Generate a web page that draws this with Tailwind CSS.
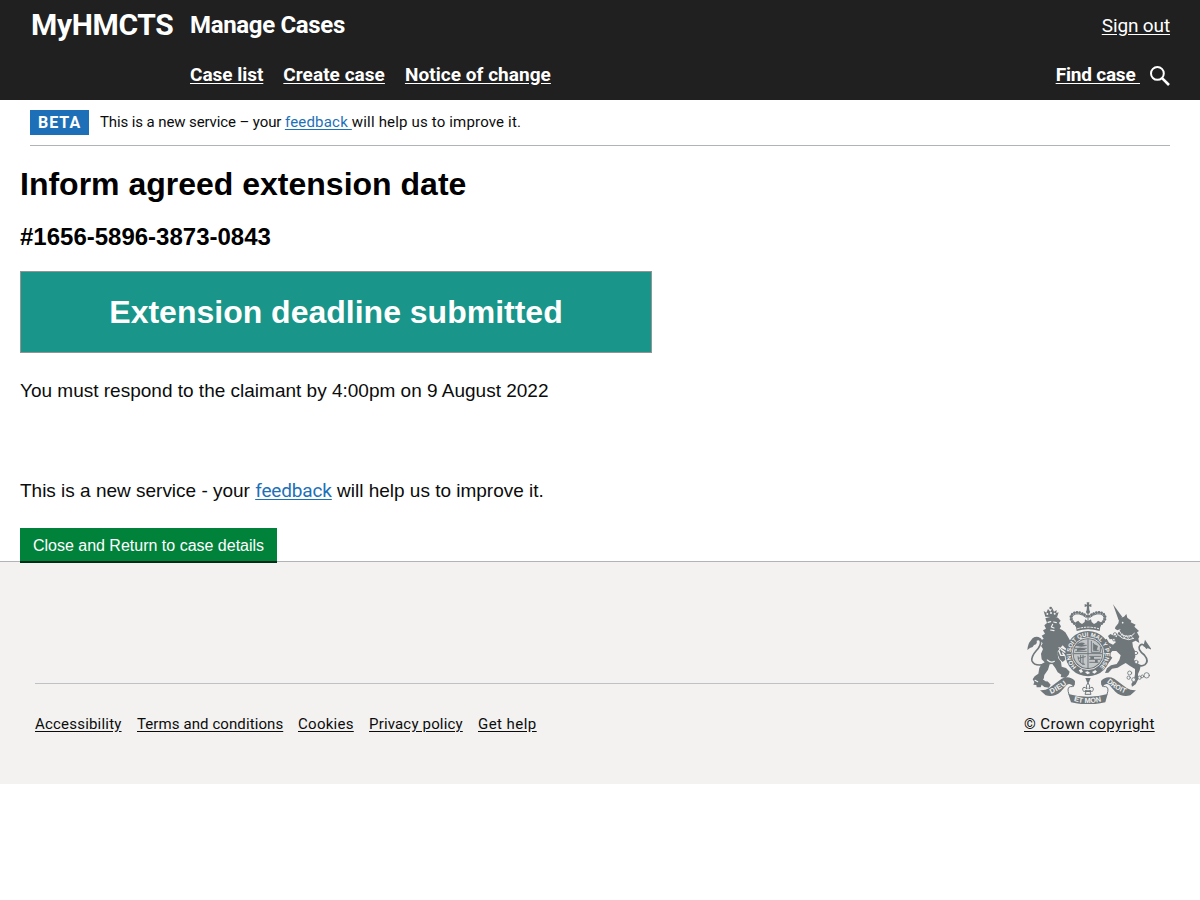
<!DOCTYPE html>
<html lang="en">
<head>
<meta charset="utf-8">
<title>Manage Cases</title>
<script src="https://cdn.jsdelivr.net/npm/@tailwindcss/browser@4"></script>
</head>
<body class="bg-white font-['Roboto',sans-serif] text-[#0b0c0c]">
<header class="flex h-[100px] flex-col bg-[#202020] px-[30px] text-white">
  <div class="flex h-[50px] items-center">
    <div class="w-40 pl-px text-[30px] leading-[50px] font-bold tracking-[-0.35px]">MyHMCTS</div>
    <div class="flex-1 text-2xl leading-[50px] font-bold tracking-[-0.33px]">Manage Cases</div>
    <a class="pt-0.5 text-[19px] leading-6 tracking-[-0.13px] underline underline-offset-2">Sign out</a>
  </div>
  <nav class="flex h-[50px] items-center gap-5 pl-40 text-[19px] font-bold">
    <a class="tracking-[-0.03px] underline underline-offset-2">Case list</a>
    <a class="tracking-[0.04px] underline underline-offset-2">Create case</a>
    <a class="tracking-[0.05px] underline underline-offset-2">Notice of change</a>
    <div class="ml-auto flex items-center gap-2.5">
      <a class="tracking-[-0.2px] whitespace-pre underline underline-offset-2">Find case </a>
      <svg class="mt-0.5 size-5" viewBox="0 0 20 20" fill="none" stroke="white"><circle cx="7.4" cy="7.4" r="6.4" stroke-width="2"/><path d="M11.8 11.8 19 19" stroke-width="2.6"/></svg>
    </div>
  </nav>
</header>
<div class="mx-[30px] flex h-[46px] items-center border-b border-[#b1b4b6]">
  <strong class="h-[25px] w-[59px] bg-[#1d70b8] pl-2 text-base leading-[25px] tracking-[1px] text-white">BETA</strong>
  <span class="ml-[11px] pb-0.5 text-[15px] leading-5 tracking-[-0.11px] whitespace-pre">This is a new service – your <a class="tracking-[0.2px] text-[#1d70b8] underline underline-offset-2">feedback </a><span class="tracking-[0.17px]">will help us to improve it.</span></span>
</div>
<main class="flex h-[415px] flex-col items-start px-5 font-['Liberation_Sans',sans-serif]">
  <h1 class="mt-5 text-[32px] leading-9 font-bold text-black">Inform agreed extension date</h1>
  <h2 class="mt-5 text-2xl leading-[30px] font-bold text-black">#1656-5896-3873-0843</h2>
  <div class="mt-[19px] flex h-[82px] w-[632px] shrink-0 items-center justify-center border border-[#949494] bg-[#19958a] text-[32px] font-bold text-white">Extension deadline submitted</div>
  <p class="mt-[25px] text-[19px] leading-[25px]">You must respond to the claimant by 4:00pm on 9 August 2022</p>
  <p class="mt-[75px] text-[19px] leading-[25px] tracking-[-0.01px]">This is a new service - your <a class="font-['Roboto',sans-serif] tracking-[-0.15px] text-[#1d70b8] underline underline-offset-2">feedback</a> will help us to improve it.</p>
  <button class="relative mt-[25px] h-[35px] w-[257px] shrink-0 border-b-2 border-[#002d18] bg-[#00823b] pt-0.5 text-base text-white">Close and Return to case details</button>
</main>
<footer class="flex h-[223px] border-t border-[#b1b4b6] bg-[#f3f2f1] pr-[45px] pl-[35px] text-[15px] leading-5">
  <div class="flex w-[959px] flex-col pt-[121px]">
    <div class="h-px bg-[#bfc1c3]"></div>
    <div class="mt-[30px] flex gap-[15px] whitespace-nowrap">
      <a class="w-[87px] tracking-[0.2px] underline underline-offset-2">Accessibility</a><a class="w-[146px] tracking-[0.09px] underline underline-offset-2">Terms and conditions</a><a class="w-14 tracking-[0.28px] underline underline-offset-2">Cookies</a><a class="w-[94px] tracking-[0.17px] underline underline-offset-2">Privacy policy</a><a class="w-[59px] tracking-[0.45px] underline underline-offset-2">Get help</a>
    </div>
  </div>
  <div class="ml-[30px] flex w-[131px] flex-col pt-10">
    <svg class="ml-0.5 h-[102px] w-[125px]" viewBox="33 21 375 306" fill="#6f777b" stroke-linejoin="round" stroke-linecap="round">
      <defs>
        <path id="motto" d="M185 216 A52 52 0 1 1 253 216"/>
        <path id="left" d="M108 297 Q138 284 160 263"/>
        <path id="mid" d="M176 318 Q219 330 263 318"/>
        <path id="right" d="M275 262 Q300 284 334 297"/>
      </defs>
      <!-- Lion with crown -->
      <path d="M91 65 86 48 94 53 99 42 106 50 112 39 117 50 125 45 124 54 131 52 126 67Z"/>
      <g fill="#f3f2f1"><circle cx="97" cy="57" r="3"/><circle cx="108" cy="54" r="3"/><circle cx="119" cy="56" r="3"/></g>
      <circle cx="107" cy="39" r="4"/>
      <path d="M91 70 Q110 61 129 68L137 77 132 84 138 94 134 101 142 105 151 112 158 124 166 138 161 147 156 153 169 156 172 166 161 165 150 158 143 151 135 160 127 172 130 190 138 200 140 215 153 219 164 230 161 239 152 249 137 246 139 239 128 232 121 219 112 207 104 208 99 224 88 240 86 253 99 260 107 269 102 278 88 276 80 269 77 277 65 277 64 270 55 269 58 261 53 253 59 244 70 236 73 219 80 207 89 202 80 193 78 176 84 162 78 153 83 145 76 137 86 131 80 122 90 116 84 106 93 101 88 91 96 84Z"/>
      <path d="M88 208Q59 215 51 198 48 185 63 168 80 151 76 136 70 124 55 132" fill="none" stroke="#6f777b" stroke-width="5"/>
      <path d="M37 165Q39 144 47 137 56 123 70 126 84 131 80 141 72 133 65 137 68 147 57 150 53 159 46 158Z"/>
      <path d="M99 82 107 80M116 81 124 83M113 88 109 96 117 99M107 105 117 107M97 195Q108 205 118 199M86 253 94 258M60 256 68 260M142 163 132 158" fill="none" stroke="#f3f2f1" stroke-width="3.5"/>
      <path d="M126 173 140 160 158 169 166 169 158 184 148 180 151 194 143 201 134 193Z"/>
      <path d="M132 168 137 181 149 181 143 174M139 164 151 172" fill="none" stroke="#f3f2f1" stroke-width="4"/>
      <!-- Unicorn -->
      <path d="M294 28 322 66 311 76Z"/>
      <path d="M313 70 327 65 334 57 337 68 349 77 347 82 362 89 358 95 372 108 366 112 373 125 370 131 373 144 362 137 352 142 354 156 360 168 361 185 357 195 365 201 377 213 374 226 369 237 370 252 362 268 351 275 349 267 357 254 360 237 360 222 345 213 332 204 320 211 308 218 291 221 280 233 270 234 276 220 288 211 305 207 313 195 317 181 304 168 292 168 282 179 292 188 283 201 273 196 276 190 269 182 276 171 288 157 277 150 267 145 268 136 275 131 282 143 294 149 303 141 291 132 284 133 279 123 286 117 297 122 305 127 309 114 317 102 307 106 300 101 301 96 310 85Z"/>
      <path d="M359 203Q376 219 390 209 403 198 388 180 365 162 375 151 384 143 395 159" fill="none" stroke="#6f777b" stroke-width="5"/>
      <path d="M390 134 398 146 411 165 399 160 385 154Z"/>
      <path d="M313 108 320 119 334 124 350 122 358 115M309 119 322 129 341 134 356 130" fill="none" stroke="#f3f2f1" stroke-width="3"/>
      <path d="M317 123 322 116 328 129 334 121 340 131 347 120 353 129" fill="none" stroke="#f3f2f1" stroke-width="2"/>
      <circle cx="323" cy="83" r="2.5" fill="#f3f2f1"/>
      <g fill="#f3f2f1" stroke="#6f777b" stroke-width="2.5"><circle cx="300" cy="118" r="5"/><circle cx="297" cy="134" r="4"/><circle cx="363" cy="174" r="5"/><circle cx="364" cy="201" r="5"/><circle cx="344" cy="234" r="6"/><circle cx="341" cy="248" r="5"/><circle cx="356" cy="254" r="6"/><circle cx="374" cy="248" r="5"/><circle cx="395" cy="241" r="8"/><circle cx="382" cy="244" r="4"/></g>
      <!-- Royal crown -->
      <path d="M215 22H223L222 29 229 27V36L222 34 223 45H215L216 34 209 36V27L216 29Z"/>
      <circle cx="219" cy="50" r="6"/>
      <g fill="none" stroke="#6f777b"><path d="M184 91Q158 72 172 57 188 44 216 64M254 91Q280 72 266 57 250 44 222 64" stroke-width="8" stroke-dasharray=".1 8"/><path d="M186 89Q164 73 174 61 190 49 213 67M252 89Q274 73 264 61 248 49 225 67M219 54V84" stroke-width="3"/></g>
      <path d="M181 82 190 77 195 83 201 87 209 81 210 73 219 78 228 73 230 81 237 87 244 83 249 77 258 82 254 108Q219 98 185 108Z"/>
      <path d="M188 101Q219 92 251 101" fill="none" stroke="#f3f2f1" stroke-width="3" stroke-dasharray="5 5"/>
      <!-- Garter and shield -->
      <circle cx="219" cy="176" r="68"/>
      <circle cx="219" cy="176" r="48" fill="none" stroke="#f3f2f1" stroke-width="2.5"/>
      <circle cx="219" cy="176" r="43" fill="#c3c7c8"/>
      <g fill="none" stroke="#6f777b" stroke-width="3"><path d="M219 134V218M177 176H261M182 151H214M180 160H214M182 169H214M224 184H257M224 193H255M224 202H249M229 139V172H256V157M235 145V166H250M189 185Q190 207 209 208M197 181V203M204 181V209M190 190 211 185"/></g>
      <path d="M186 148Q197 139 210 145L204 149 213 153 199 155 186 153ZM186 161Q198 155 213 164L186 168ZM237 147 249 153 244 169 235 162ZM226 185H237V192H226ZM240 195H248V202H240Z"/>
      <g fill="#f3f2f1" stroke="none"><path d="M191 226 199 222 204 230 197 234ZM210 231 218 229 226 234 217 238ZM231 231 241 225 246 230 238 236Z"/></g>
      <text font-family="Liberation Sans,sans-serif" font-size="18" font-weight="700" fill="#f3f2f1"><textPath href="#motto" textLength="252" lengthAdjust="spacingAndGlyphs">HONI SOIT QUI MAL Y PENSE</textPath></text>
      <!-- Motto ribbon -->
      <path d="M75 286Q91 287 103 279L140 251Q163 240 180 258L176 276Q166 262 155 270L137 290Q117 308 92 301Z"/>
      <path d="M363 286Q347 287 335 279L298 251Q275 240 258 258L262 276Q272 262 283 270L301 290Q321 308 346 301Z"/>
      <path d="M160 297Q219 314 278 297L271 322Q219 334 168 322Z"/>
      <path d="M178 260Q181 277 166 275 154 277 162 298M260 260Q257 277 272 275 284 277 276 298" fill="none" stroke="#6f777b" stroke-width="3"/>
      <g font-family="Liberation Sans,sans-serif" font-size="22" font-weight="700" fill="#f3f2f1"><text><textPath href="#left" textLength="56">DIEU</textPath></text><text><textPath href="#mid" textLength="84">ET MON</textPath></text><text><textPath href="#right" textLength="64" lengthAdjust="spacingAndGlyphs">DROIT</textPath></text></g>
      <path d="M219 263Q210 273 216 282 204 271 203 283 204 293 214 287L210 298H228L224 287Q234 293 235 283 234 271 222 282 228 273 219 263Z" fill="#f3f2f1" stroke="#6f777b" stroke-width="3"/>
      <path d="M211 249H227L222 262H216ZM210 286H228V291H210Z"/>
    </svg>
    <a class="mt-2.5 tracking-[0.38px] whitespace-nowrap underline underline-offset-2">© Crown copyright</a>
  </div>
</footer>
</body>
</html>
